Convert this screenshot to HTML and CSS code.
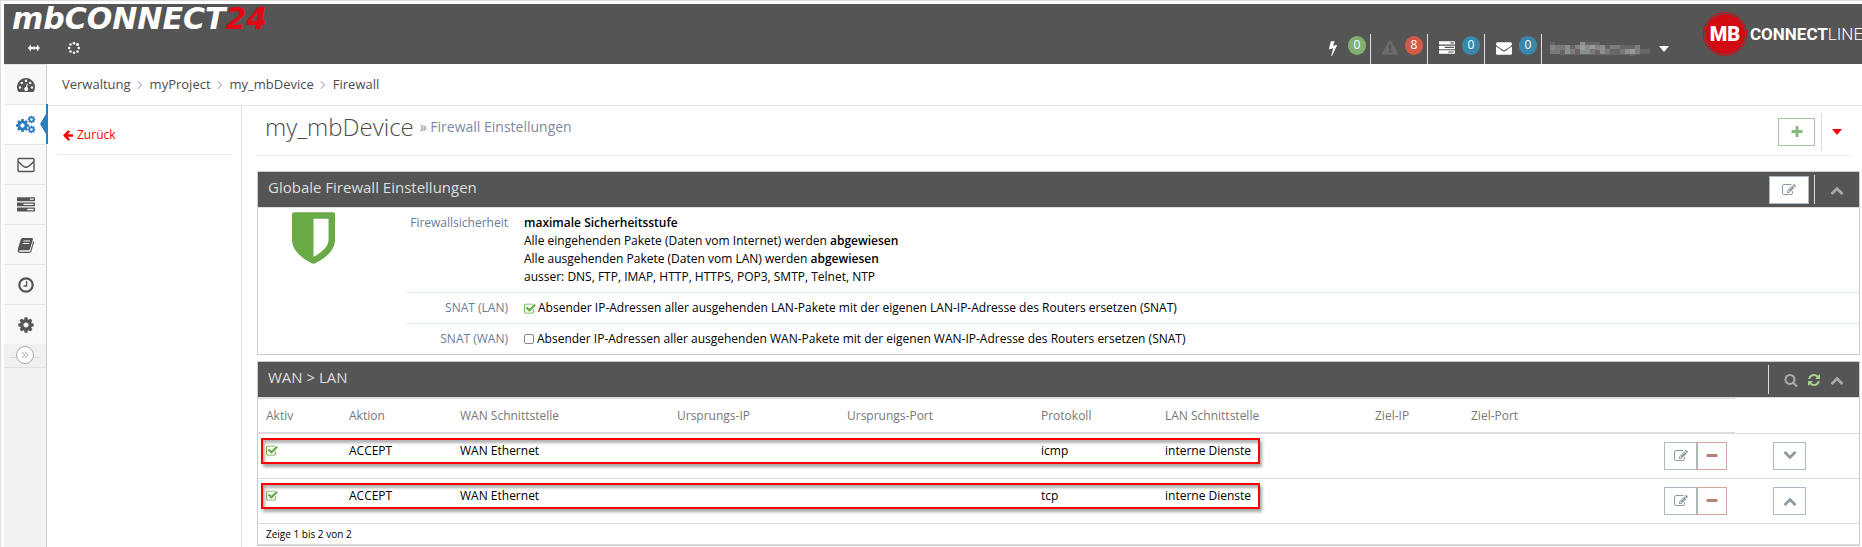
FILE: index.html
```html
<!DOCTYPE html>
<html lang="de">
<head>
    <meta charset="UTF-8">
    <meta name="viewport" content="width=device-width, initial-scale=1.0">
    <title>mbCONNECT24 - Firewall</title>
    <link rel="stylesheet" href="styles.css">
</head>
<body>
    <!-- icon set -->
    <svg class="sprite" aria-hidden="true">
        <symbol id="i-tasks" viewBox="0 0 1792 1792"><path d="M1024 1408h640v-128h-640v128zm-384-512h1024v-128h-1024v128zm640-512h384v-128h-384v128zm512 832v256q0 26-19 45t-45 19h-1664q-26 0-45-19t-19-45v-256q0-26 19-45t45-19h1664q26 0 45 19t19 45zm0-512v256q0 26-19 45t-45 19h-1664q-26 0-45-19t-19-45v-256q0-26 19-45t45-19h1664q26 0 45 19t19 45zm0-512v256q0 26-19 45t-45 19h-1664q-26 0-45-19t-19-45v-256q0-26 19-45t45-19h1664q26 0 45 19t19 45z"/></symbol>
        <symbol id="i-cog" viewBox="0 0 1792 1792"><path d="M1152 896q0-106-75-181t-181-75-181 75-75 181 75 181 181 75 181-75 75-181zm512-109v222q0 12-8 23t-20 13l-185 28q-19 54-39 91 35 50 107 138 10 12 10 25t-9 23q-27 37-99 108t-94 71q-12 0-26-9l-138-108q-44 23-91 38-16 136-29 186-7 28-36 28h-222q-14 0-24.500-8.500t-11.500-21.500l-28-184q-49-16-90-37l-141 107q-10 9-25 9-14 0-25-11-126-114-165-168-7-10-7-23 0-12 8-23 15-21 51-66.500t54-70.500q-27-50-41-99l-183-27q-13-2-21-12.500t-8-23.500v-222q0-12 8-23t19-13l186-28q14-46 39-92-40-57-107-138-10-12-10-24 0-10 9-23 26-36 98.500-107.500t94.500-71.500q13 0 26 10l138 107q44-23 91-38 16-136 29-186 7-28 36-28h222q14 0 24.500 8.500t11.500 21.500l28 184q49 16 90 37l142-107q9-9 24-9 13 0 25 10 129 119 165 170 7 8 7 22 0 12-8 23-15 21-51 66.500t-54 70.500q26 50 41 98l183 28q13 2 21 12.500t8 23.500z"/></symbol>
        <symbol id="i-envelope" viewBox="0 0 1792 1792"><path d="M1792 710v794q0 66-47 113t-113 47h-1472q-66 0-113-47t-47-113v-794q44 49 101 87 362 246 497 345 57 42 92.500 65.500t94.500 48 110 24.500h2q51 0 110-24.500t94.500-48 92.500-65.500q170-123 498-345 57-39 100-87zm0-294q0 79-49 151t-122 123q-376 261-468 325-10 7-42.500 30.500t-54 38-52 32.500-57.500 27-50 9h-2q-23 0-50-9t-57.500-27-52-32.500-54-38-42.500-30.500q-91-64-262-182.500t-205-142.500q-62-42-117-115.500t-55-136.500q0-78 41.500-130t118.500-52h1472q65 0 112.500 47t47.500 113z"/></symbol>
        <symbol id="i-up" viewBox="0 0 1792 1792"><path d="M1683 1331l-166 165q-19 19-45 19t-45-19l-531-531-531 531q-19 19-45 19t-45-19l-166-165q-19-19-19-45.500t19-45.500l742-741q19-19 45-19t45 19l742 741q19 19 19 45.500t-19 45.500z"/></symbol>
        <symbol id="i-down" viewBox="0 0 1792 1792"><path transform="rotate(180 896 896)" d="M1683 1331l-166 165q-19 19-45 19t-45-19l-531-531-531 531q-19 19-45 19t-45-19l-166-165q-19-19-19-45.500t19-45.500l742-741q19-19 45-19t45 19l742 741q19 19 19 45.500t-19 45.500z"/></symbol>
        <symbol id="i-plus" viewBox="0 0 1792 1792"><path d="M1600 736v192q0 40-28 68t-68 28h-416v416q0 40-28 68t-68 28h-192q-40 0-68-28t-28-68v-416h-416q-40 0-68-28t-28-68v-192q0-40 28-68t68-28h416v-416q0-40 28-68t68-28h192q40 0 68 28t28 68v416h416q40 0 68 28t28 68z"/></symbol>
        <symbol id="i-minus" viewBox="0 0 1792 1792"><rect x="192" y="640" width="1408" height="384" rx="96"/></symbol>
        <symbol id="i-refresh" viewBox="0 0 1792 1792"><path d="M1639 1056q0 5-1 7-64 268-268 434.500t-478 166.500q-146 0-282.500-55t-243.500-157l-129 129q-19 19-45 19t-45-19-19-45v-448q0-26 19-45t45-19h448q26 0 45 19t19 45-19 45l-137 137q71 66 161 102t187 36q134 0 250-65t186-179q11-17 53-117 8-23 30-23h192q13 0 22.500 9.500t9.500 22.500zm25-800v448q0 26-19 45t-45 19h-448q-26 0-45-19t-19-45 19-45l138-138q-148-137-349-137-134 0-250 65t-186 179q-11 17-53 117-8 23-30 23h-199q-13 0-22.500-9.500t-9.500-22.500v-7q65-268 270-434.500t480-166.500q146 0 284 55.500t245 156.500l130-129q19-19 45-19t45 19 19 45z"/></symbol>
        <symbol id="i-search" viewBox="0 0 1792 1792"><path d="M1216 832q0-185-131.500-316.500t-316.500-131.500-316.500 131.500-131.500 316.500 131.500 316.500 316.500 131.500 316.500-131.500 131.500-316.500zm512 832q0 52-38 90t-90 38q-54 0-90-38l-343-342q-179 124-399 124-143 0-273.500-55.500t-225-150-150-225-55.500-273.500 55.500-273.500 150-225 225-150 273.500-55.500 273.500 55.500 225 150 150 225 55.500 273.500q0 220-124 399l343 343q37 37 37 90z"/></symbol>
        <symbol id="i-warning" viewBox="0 0 1792 1792"><path d="M1024 1375v-190q0-14-9.500-23.500t-22.500-9.500h-192q-13 0-22.500 9.500t-9.500 23.500v190q0 14 9.500 23.500t22.500 9.500h192q13 0 22.500-9.500t9.500-23.500zm-2-374l18-459q0-12-10-19-13-11-24-11h-220q-11 0-24 11-10 7-10 21l17 457q0 10 10 16.500t24 6.500h185q14 0 23.500-6.500t10.500-16.500zm-14-934l768 1408q35 63-2 126-17 29-46.500 46t-63.500 17h-1536q-34 0-63.500-17t-46.500-46q-37-63-2-126l768-1408q17-31 47-49t65-18 65 18 47 49z"/></symbol>
        <symbol id="i-bolt" viewBox="0 0 1792 1792"><path d="M1333 566q18 20 7 44l-540 1157q-13 25-42 25-4 0-14-2-17-5-25.500-19t-4.500-30l197-808-406 101q-4 1-12 1-18 0-31-11-18-15-13-39l201-825q4-14 16-23t28-9h328q19 0 32 12.500t13 29.500q0 8-5 18l-171 463 396-98q8-2 12-2 19 0 34 15z"/></symbol>
        <symbol id="i-edit" viewBox="0 0 1792 1792"><path d="M888 1184l116-116-152-152-116 116v56h96v96h56zm440-720q-16-16-33 1l-350 350q-17 17-1 33t33-1l350-350q17-17 1-33zm80 594v190q0 119-84.500 203.500t-203.500 84.500h-832q-119 0-203.500-84.500t-84.500-203.500v-832q0-119 84.500-203.500t203.500-84.500h832q63 0 117 25 15 7 18 23 3 17-9 29l-49 49q-14 14-32 8-23-6-45-6h-832q-66 0-113 47t-47 113v832q0 66 47 113t113 47h832q66 0 113-47t47-113v-126q0-13 9-22l64-64q15-15 35-7t20 29zm-96-738l288 288-672 672h-288v-288zm444 132l-92 92-288-288 92-92q28-28 68-28t68 28l152 152q28 28 28 68t-28 68z"/></symbol>
        <symbol id="i-left" viewBox="0 0 1792 1792"><path d="M1664 896v128q0 53-32.500 90.500t-84.500 37.500h-704l293 294q38 36 38 90t-38 90l-75 76q-37 37-90 37-52 0-91-37l-651-652q-37-37-37-90 0-52 37-91l651-650q38-38 91-38 52 0 90 38l75 74q38 38 38 91t-38 91l-293 293h704q52 0 84.500 37.500t32.500 90.500z"/></symbol>
        <symbol id="i-shield" viewBox="256 128 1280 1536"><path d="M1344 960v-640h-448v1137q119-63 213-137 235-184 235-360zm192-768v768q0 86-33.500 170.500t-83 150-118 127.500-126.500 103-121 77.500-89.500 49.500-42.500 20q-12 6-26 6t-26-6q-16-7-42.500-20t-89.500-49.500-121-77.500-126.500-103-118-127.500-83-150-33.500-170.500v-768q0-26 19-45t45-19h1152q26 0 45 19t19 45z"/></symbol>
        <symbol id="i-caret" viewBox="0 0 10 6"><path d="M0 0h10L5 6z"/></symbol>
    </svg>

    <header class="navbar">
        <div class="navbar-left">
            <a class="brand" href="#">mbCONNECT<span class="brand-24">24</span></a>
            <div class="tools">
                <svg class="icon-12" viewBox="0 0 12 12"><path fill="currentColor" d="M0 6l3-3.500v2.300h6V2.500L12 6 9 9.500V7.200H3v2.300z"/></svg>
                <svg class="icon-12" viewBox="0 0 12 12" fill="currentColor"><circle cx="6" cy="1.300" r="1.300"/><circle cx="9.500" cy="2.500" r="1.500"/><circle cx="10.800" cy="6" r="1.200"/><circle cx="9.500" cy="9.500" r="1.200"/><circle cx="6" cy="10.800" r="1.200"/><circle cx="2.500" cy="9.500" r="1.200"/><circle cx="1.200" cy="6" r="1.200"/><circle cx="2.500" cy="2.500" r="1.200"/></svg>
            </div>
        </div>
        <div class="navbar-right">
            <ul class="status">
                <li><svg class="icon-16"><use href="#i-bolt"/></svg><span class="badge badge-green">0</span></li>
                <li><svg class="icon-16 icon-dim"><use href="#i-warning"/></svg><span class="badge badge-red">8</span></li>
                <li><svg class="icon-16"><use href="#i-tasks"/></svg><span class="badge badge-blue">0</span></li>
                <li><svg class="icon-16"><use href="#i-envelope"/></svg><span class="badge badge-blue">0</span></li>
            </ul>
            <div class="user">
                <svg class="user-name" viewBox="0 0 100 14" shape-rendering="crispEdges">
                    <path fill="#666" d="M0 0h5v3H0zM10 3h80v10H10zM30 0h20v3H30zM90 7h10v5H90zM80 12h5v2h-5z"/>
                    <path fill="#8b7f8b" d="M0 3h5v5H0zM25 3h5v4h-5zM45 3h5v5h-5z"/>
                    <path fill="#777a77" d="M0 8h5v4H0zM5 3h5v9H5zM10 3h5v5h-5zM40 7h5v5h-5zM55 7h5v5h-5zM65 3h5v4h-5zM70 7h5v5h-5z"/>
                    <path fill="#8c908c" d="M15 3h5v9h-5zM30 0h5v12h-5zM35 3h5v9h-5zM50 3h5v9h-5zM75 7h5v5h-5z"/>
                    <path fill="#9c999a" d="M30 3h5v5h-5zM40 3h5v4h-5zM80 7h5v5h-5z"/>
                    <path fill="#857b7a" d="M20 7h5v5h-5zM60 3h5v4h-5zM85 3h5v9h-5z"/>
                </svg>
                <svg class="caret"><use href="#i-caret"/></svg>
            </div>
            <div class="company">
                <svg class="company-mark" viewBox="0 0 44 44"><circle cx="22" cy="22" r="21.500" fill="none" stroke="#d20a11"/><circle cx="22" cy="22" r="20" fill="#d20a11"/><text x="22" y="29" text-anchor="middle">MB</text></svg>
                <span><b>CONNECT</b>LINE</span>
            </div>
        </div>
    </header>

    <div class="page">
        <nav class="sidebar">
            <a href="#"><svg class="icon-18" viewBox="0 0 18 18"><path d="M1.500 16A9 9 0 1 1 16.500 16z"/><g fill="#f8f8f8"><circle cx="3" cy="11.500" r="1.200"/><circle cx="4.800" cy="7" r="1.200"/><circle cx="9" cy="4.800" r="1.200"/><circle cx="13.200" cy="7" r="1.200"/><circle cx="15" cy="11.500" r="1.200"/><path d="M9.800 7.500l1 .2-.7 3.600a2 2 0 1 1-1.100-.2z"/></g></svg></a>
            <a href="#" class="active"><svg class="icon-20" viewBox="0 0 20 20"><use href="#i-cog" x="-1" y="3" width="15" height="15"/><use href="#i-cog" x="11" y="0" width="9" height="9"/><use href="#i-cog" x="11" y="10" width="9" height="9"/></svg></a>
            <a href="#"><svg class="icon-18" viewBox="0 0 18 18"><rect x="1" y="2.500" width="16" height="13" rx="1" fill="none" stroke="currentColor" stroke-width="1.400"/><path fill="none" stroke="currentColor" stroke-width="1.400" d="M1.200 5.500C4 8.500 7 11.300 9 11.300S14 8.500 16.800 5.500"/></svg></a>
            <a href="#"><svg class="icon-18"><use href="#i-tasks"/></svg></a>
            <a href="#"><svg class="icon-18" viewBox="0 0 18 18"><path d="M5.500 2h9.500q1.200 0 .8 1.400L13 13.200q-.4 1-1.500 1H3q-1 0-.9.800.1.700 1 .7h9.300q.8 0 1-.7L16.200 5q1.200.3.800 1.500L14.300 15.600q-.5 1.400-1.900 1.400H3q-2 0-2.300-2L1 12.500 3.700 3.600Q4.200 2 5.500 2z"/><path stroke="#f8f8f8" d="M6.400 5h6.600M5.700 7.500h6.500"/></svg></a>
            <a href="#"><svg class="icon-18" viewBox="0 0 18 18"><circle cx="9" cy="9" r="6.700" fill="none" stroke="currentColor" stroke-width="2.200"/><path fill="none" stroke="currentColor" stroke-width="1.300" d="M9.600 5v5H6.500"/></svg></a>
            <a href="#"><svg class="icon-18"><use href="#i-cog"/></svg></a>
            <div class="sidebar-toggle"><button type="button" aria-label="Menü"><svg viewBox="0 0 8 8"><path fill="none" stroke="currentColor" d="M1 1l3 3-3 3M4 1l3 3-3 3"/></svg></button></div>
        </nav>

        <div class="content">
            <ol class="breadcrumb">
                <li><a href="#">Verwaltung</a></li>
                <li><a href="#">myProject</a></li>
                <li><a href="#">my_mbDevice</a></li>
                <li>Firewall</li>
            </ol>
            <div class="columns">
                <aside class="submenu">
                    <a href="#"><svg class="icon-12"><use href="#i-left"/></svg>Zurück</a>
                </aside>
                <main>
                    <div class="page-header">
                        <h1>my_mbDevice <small>» Firewall Einstellungen</small></h1>
                        <div class="page-actions">
                            <button type="button" class="btn btn-add" aria-label="Hinzufügen"><svg class="icon-14"><use href="#i-plus"/></svg></button>
                            <span class="more"><svg class="caret"><use href="#i-caret"/></svg></span>
                        </div>
                    </div>

                    <section class="widget">
                        <div class="widget-header">
                            <h2>Globale Firewall Einstellungen</h2>
                            <button type="button" class="btn btn-edit-wide" aria-label="Bearbeiten"><svg class="icon-14"><use href="#i-edit"/></svg></button>
                            <div class="widget-toolbar"><svg class="icon-14"><use href="#i-up"/></svg></div>
                        </div>
                        <div class="settings">
                            <svg class="shield"><use href="#i-shield"/></svg>
                            <dl class="info">
                                <div>
                                    <dt>Firewallsicherheit</dt>
                                    <dd>
                                        <b>maximale Sicherheitsstufe</b><br>
                                        Alle eingehenden Pakete (Daten vom Internet) werden <b>abgewiesen</b><br>
                                        Alle ausgehenden Pakete (Daten vom LAN) werden <b>abgewiesen</b><br>
                                        ausser: DNS, FTP, IMAP, HTTP, HTTPS, POP3, SMTP, Telnet, NTP
                                    </dd>
                                </div>
                                <div>
                                    <dt>SNAT (LAN)</dt>
                                    <dd><label><input type="checkbox" checked>Absender IP-Adressen aller ausgehenden LAN-Pakete mit der eigenen LAN-IP-Adresse des Routers ersetzen (SNAT)</label></dd>
                                </div>
                                <div>
                                    <dt>SNAT (WAN)</dt>
                                    <dd><label><input type="checkbox">Absender IP-Adressen aller ausgehenden WAN-Pakete mit der eigenen WAN-IP-Adresse des Routers ersetzen (SNAT)</label></dd>
                                </div>
                            </dl>
                        </div>
                    </section>

                    <section class="widget">
                        <div class="widget-header">
                            <h2>WAN &gt; LAN</h2>
                            <div class="widget-toolbar">
                                <svg class="icon-14"><use href="#i-search"/></svg>
                                <svg class="icon-14 icon-refresh"><use href="#i-refresh"/></svg>
                                <svg class="icon-14"><use href="#i-up"/></svg>
                            </div>
                        </div>
                        <table class="rules">
                            <colgroup>
                                <col class="c-active"><col class="c-action"><col class="c-wan"><col class="c-srcip"><col class="c-srcport"><col class="c-proto"><col class="c-lan"><col class="c-dstip"><col><col class="c-order">
                            </colgroup>
                            <thead>
                                <tr>
                                    <th>Aktiv</th>
                                    <th>Aktion</th>
                                    <th>WAN Schnittstelle</th>
                                    <th>Ursprungs-IP</th>
                                    <th>Ursprungs-Port</th>
                                    <th>Protokoll</th>
                                    <th>LAN Schnittstelle</th>
                                    <th>Ziel-IP</th>
                                    <th>Ziel-Port</th>
                                    <td></td>
                                </tr>
                            </thead>
                            <tbody>
                                <tr>
                                    <td class="marked"><input type="checkbox" aria-label="Aktiv" checked></td>
                                    <td>ACCEPT</td>
                                    <td>WAN Ethernet</td>
                                    <td></td>
                                    <td></td>
                                    <td>icmp</td>
                                    <td>interne Dienste</td>
                                    <td></td>
                                    <td>
                                        <div class="row-actions">
                                            <button type="button" class="btn btn-edit" aria-label="Bearbeiten"><svg class="icon-14"><use href="#i-edit"/></svg></button>
                                            <button type="button" class="btn btn-delete" aria-label="Löschen"><svg class="icon-14"><use href="#i-minus"/></svg></button>
                                        </div>
                                    </td>
                                    <td class="order"><button type="button" class="btn btn-edit" aria-label="Nach unten"><svg class="icon-14"><use href="#i-down"/></svg></button></td>
                                </tr>
                                <tr>
                                    <td class="marked"><input type="checkbox" aria-label="Aktiv" checked></td>
                                    <td>ACCEPT</td>
                                    <td>WAN Ethernet</td>
                                    <td></td>
                                    <td></td>
                                    <td>tcp</td>
                                    <td>interne Dienste</td>
                                    <td></td>
                                    <td>
                                        <div class="row-actions">
                                            <button type="button" class="btn btn-edit" aria-label="Bearbeiten"><svg class="icon-14"><use href="#i-edit"/></svg></button>
                                            <button type="button" class="btn btn-delete" aria-label="Löschen"><svg class="icon-14"><use href="#i-minus"/></svg></button>
                                        </div>
                                    </td>
                                    <td class="order"><button type="button" class="btn btn-edit" aria-label="Nach oben"><svg class="icon-14"><use href="#i-up"/></svg></button></td>
                                </tr>
                            </tbody>
                        </table>
                        <div class="table-info">Zeige 1 bis 2 von 2</div>
                    </section>
                </main>
            </div>
        </div>
    </div>
</body>
</html>
```

FILE: styles.css
```css
*,
*::before,
*::after {
    box-sizing: border-box;
}

html {
    height: 100%;
}

body {
    margin: 0;
    min-height: 100%;
    padding: 3px 0 0 3px;
    border-top: 1px solid #ddd;
    border-left: 1px solid #ddd;
    display: flex;
    flex-direction: column;
    background: #fff;
    color: #000;
    font-family: "Open Sans", "Noto Sans", sans-serif;
    font-size: 12px;
    line-height: 18px;
}

a {
    color: inherit;
    text-decoration: none;
}

svg {
    display: block;
    flex: none;
    fill: currentColor;
}

.sprite {
    position: absolute;
    width: 0;
    height: 0;
}

.icon-12 { width: 12px; height: 12px; }
.icon-14 { width: 14px; height: 14px; }
.icon-16 { width: 16px; height: 16px; }
.icon-18 { width: 18px; height: 18px; }
.icon-20 { width: 20px; height: 20px; }

.caret {
    width: 10px;
    height: 6px;
}

/* Top bar */
.navbar {
    display: flex;
    justify-content: space-between;
    height: 60px;
    background: #555;
    color: #fff;
}

.brand {
    display: block;
    padding-left: 8px;
    font-family: "DejaVu Sans", sans-serif;
    font-size: 30px;
    font-weight: bold;
    font-style: italic;
    line-height: 30px;
}

.brand-24 {
    color: #e30613;
}

.tools {
    display: flex;
    gap: 28px;
    padding: 8px 0 0 24px;
}

.navbar-right {
    display: flex;
    align-items: flex-end;
}

.status {
    display: flex;
    margin: 0;
    padding: 0;
    list-style: none;
}

.status li {
    display: flex;
    gap: 7px;
    width: 57px;
    height: 30px;
    padding: 2px 0 0 11px;
    border-right: 1px solid #ddd;
}

.status svg {
    margin-top: 4px;
}

.icon-dim {
    color: #6b6b6b;
}

.badge {
    width: 18px;
    height: 19px;
    border-radius: 9px;
    text-align: center;
}

.badge-green { background: #82af6f; }
.badge-red { background: #d15b47; }
.badge-blue { background: #3a87ad; }

.user {
    display: flex;
    align-items: center;
    gap: 9px;
    height: 30px;
    padding: 0 34px 0 8px;
}

.user-name {
    width: 100px;
    height: 14px;
}

.company {
    display: flex;
    align-items: center;
    gap: 3px;
    width: 159px;
    height: 60px;
    padding-bottom: 1px;
    font-family: Roboto, sans-serif;
    font-size: 17px;
    font-weight: 300;
    white-space: nowrap;
}

.company b {
    font-weight: 700;
}

.company-mark {
    width: 44px;
    height: 44px;
}

.company-mark text {
    fill: #fff;
    font-size: 20px;
    font-weight: 900;
}

/* Left icon bar */
.page {
    display: flex;
    flex: 1;
}

.sidebar {
    width: 43px;
    flex: none;
    background: #f2f2f2;
    border-right: 1px solid #ccc;
    color: #555;
}

.sidebar a {
    position: relative;
    display: flex;
    align-items: center;
    justify-content: center;
    height: 40px;
    padding-left: 2px;
    border-top: 1px solid #e5e5e5;
    background: #f8f8f8;
}

.sidebar a.active {
    background: #fff;
    color: #2b7dbc;
}

.sidebar a.active::before {
    content: "";
    position: absolute;
    top: 9px;
    right: 0;
    border: solid transparent;
    border-width: 10px 6px 10px 0;
    border-right-color: #2b7dbc;
}

.sidebar a.active::after {
    content: "";
    position: absolute;
    top: -1px;
    right: -2px;
    width: 2px;
    height: 40px;
    background: #2b7dbc;
}

.sidebar-toggle {
    display: flex;
    justify-content: center;
    padding: 2px 0 3px;
    border-bottom: 1px solid #e0e0e0;
    background: linear-gradient(#ddd, #ddd) center 13px / 32px 1px no-repeat #f0f0f0;
}

.sidebar-toggle button {
    display: flex;
    align-items: center;
    justify-content: center;
    width: 18px;
    height: 18px;
    padding: 0;
    border: 1px solid #aaa;
    border-radius: 50%;
    background: #fff;
    color: #aaa;
}

.sidebar-toggle svg {
    width: 8px;
    height: 8px;
}

/* Breadcrumb */
.content {
    flex: 1;
    min-width: 0;
    display: flex;
    flex-direction: column;
}

.breadcrumb {
    display: flex;
    margin: 0;
    padding: 0 15px;
    list-style: none;
    border-bottom: 1px solid #e5e5e5;
    color: #4c4c4c;
    font-size: 13px;
    line-height: 41px;
}

.breadcrumb li {
    display: flex;
    align-items: center;
}

.breadcrumb li + li::before {
    content: "";
    width: 6px;
    height: 6px;
    margin: 0 9px 0 4px;
    border: solid #b2b6bf;
    border-width: 1px 1px 0 0;
    transform: rotate(45deg);
}

.columns {
    display: flex;
    flex: 1;
}

.submenu {
    width: 195px;
    flex: none;
    padding: 10px;
    border-right: 1px solid #e0e0e0;
}

.submenu a {
    display: flex;
    align-items: center;
    gap: 3px;
    height: 39px;
    padding: 0 5px;
    border-bottom: 1px dotted #ddd;
    color: #f00;
}

main {
    flex: 1;
    min-width: 0;
    padding: 0 2px 0 15px;
}

.page-header {
    display: flex;
    justify-content: space-between;
    align-items: flex-start;
    height: 50px;
    margin: 0 10px 15px 0;
    border-bottom: 1px dotted #ddd;
}

.page-header h1 {
    display: flex;
    align-items: center;
    gap: 6px;
    margin: 0;
    padding: 5px 0 0 8px;
    color: #4c4c4c;
    font-size: 24px;
    font-weight: 300;
    line-height: 32px;
}

.page-header small {
    color: #8089a0;
    font-size: 14px;
    font-weight: 400;
}

.page-actions {
    display: flex;
    align-items: center;
    gap: 6px;
    padding-top: 7px;
}

.more {
    display: flex;
    align-items: center;
    height: 38px;
    padding: 0 8px 0 10px;
    border-left: 1px solid #ddd;
    color: #f00;
}

.btn {
    display: flex;
    align-items: center;
    justify-content: center;
    height: 28px;
    padding: 0;
    border: 1px solid #abbac3;
    background: #fff;
    color: #8b9aa3;
}

.btn-add {
    width: 37px;
    border-color: #a7c9a1;
    color: #87b87f;
}

.btn-edit {
    width: 33px;
}

.btn-edit-wide {
    width: 40px;
    margin-right: 5px;
}

.btn-delete {
    width: 30px;
    border-color: #d7a59d;
    color: #b98177;
}

/* Panels */
.widget {
    margin-bottom: 6px;
    border: 1px solid #ccc;
}

.widget-header {
    display: flex;
    align-items: center;
    height: 36px;
    border-bottom: 1px solid #ddd;
    background: #555;
    color: #ddd;
}

.widget-header h2 {
    flex: 1;
    margin: 0;
    padding: 0 0 5px 10px;
    font-size: 15px;
    font-weight: 400;
}

.widget-toolbar {
    display: flex;
    align-items: center;
    gap: 9px;
    height: 29px;
    padding: 0 15px;
    border-left: 1px solid #ddd;
    color: #aaa;
}

.icon-refresh {
    color: #acd392;
}

.settings {
    display: flex;
    align-items: flex-start;
    gap: 71px;
    padding-left: 34px;
}

.shield {
    width: 43px;
    height: 52px;
    margin-top: 4px;
    color: #69aa46;
}

.info {
    flex: 1;
    margin: 0;
}

.info div {
    display: flex;
    padding: 6px 0;
}

.info div + div {
    border-top: 1px dotted #c9dfee;
}

.info dt {
    width: 102px;
    margin-right: 16px;
    color: #667e99;
    text-align: right;
}

.info dd {
    margin: 0;
}

.info b {
    font-weight: 600;
}

.info label {
    display: flex;
    align-items: center;
}

/* Tick boxes */
input[type="checkbox"] {
    appearance: none;
    display: block;
    width: 10px;
    height: 10px;
    margin: 0 3px 0 0;
    border: 1px solid #888;
    border-radius: 2px;
}

input[type="checkbox"]:checked {
    width: 12px;
    height: 12px;
    margin-right: 2px;
    border: 0;
    background: url("data:image/svg+xml,%3Csvg xmlns='http://www.w3.org/2000/svg' viewBox='64 64 1700 1500' fill='%2369aa46'%3E%3Cpath d='M1472 930v318q0 119-84.500 203.500t-203.500 84.500h-832q-119 0-203.500-84.500t-84.500-203.500v-832q0-119 84.500-203.500t203.500-84.500h832q63 0 117 25 15 7 18 23 3 17-9 29l-49 49q-10 10-23 10-3 0-9-2-23-6-45-6h-832q-66 0-113 47t-47 113v832q0 66 47 113t113 47h832q66 0 113-47t47-113v-254q0-13 9-22l64-64q10-10 23-10 6 0 12 3 20 8 20 29zm231-489l-814 814q-24 24-57 24t-57-24l-430-430q-24-24-24-57t24-57l110-110q24-24 57-24t57 24l263 263 647-647q24-24 57-24t57 24l110 110q24 24 24 57t-24 57z'/%3E%3C/svg%3E") center / contain no-repeat;
}

/* Rule table */
.rules {
    width: 100%;
    table-layout: fixed;
    border-collapse: separate;
    border-spacing: 0;
}

.c-active { width: 83px; }
.c-action { width: 111px; }
.c-wan { width: 217px; }
.c-srcip { width: 170px; }
.c-srcport { width: 194px; }
.c-proto { width: 124px; }
.c-lan { width: 210px; }
.c-dstip { width: 96px; }
.c-order { width: 124px; }

.rules th {
    height: 36px;
    padding: 0 8px;
    border-top: 1px solid #ddd;
    border-bottom: 2px solid #ddd;
    color: #777;
    font-weight: 400;
    text-align: left;
}

.rules td {
    padding: 8px;
    border-bottom: 1px solid #ddd;
    vertical-align: top;
}

.rules input {
    margin-top: 2px;
}

.row-actions {
    display: flex;
    justify-content: flex-end;
}

.rules .order {
    padding-left: 38px;
}

/* Red frame around the rule's data */
.marked {
    position: relative;
}

.marked::after {
    content: "";
    position: absolute;
    top: 4px;
    left: 3px;
    width: 999px;
    height: 26px;
    border: 2px solid #f00;
    box-shadow: 2px 3px 3px rgba(0, 0, 0, 0.35), inset 2px 3px 3px rgba(0, 0, 0, 0.3);
    pointer-events: none;
}

.table-info {
    padding: 1px 8px;
    border-bottom: 1px solid #ddd;
    font-size: 10px;
}
```
